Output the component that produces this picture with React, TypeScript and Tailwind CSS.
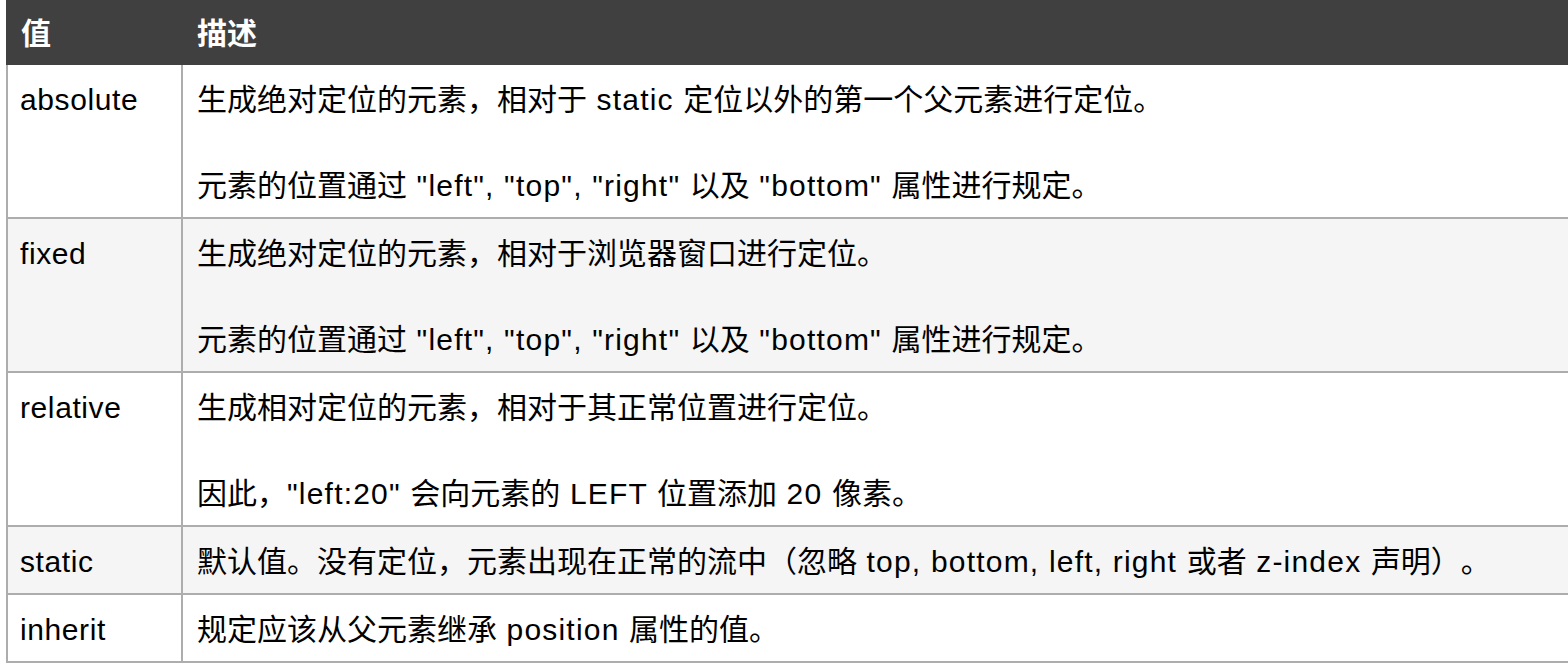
const rows = [
  {
    value: 'absolute',
    lines: ['生成绝对定位的元素，相对于 static 定位以外的第一个父元素进行定位。', '元素的位置通过 "left", "top", "right" 以及 "bottom" 属性进行规定。'],
    alt: false,
  },
  {
    value: 'fixed',
    lines: ['生成绝对定位的元素，相对于浏览器窗口进行定位。', '元素的位置通过 "left", "top", "right" 以及 "bottom" 属性进行规定。'],
    alt: true,
  },
  {
    value: 'relative',
    lines: ['生成相对定位的元素，相对于其正常位置进行定位。', '因此，"left:20" 会向元素的 LEFT 位置添加 20 像素。'],
    alt: false,
  },
  {
    value: 'static',
    lines: ['默认值。没有定位，元素出现在正常的流中（忽略 top, bottom, left, right 或者 z-index 声明）。'],
    alt: true,
  },
  {
    value: 'inherit',
    lines: ['规定应该从父元素继承 position 属性的值。'],
    alt: false,
  },
]

// 西文字符稍微拉开一点，贴近原图的字宽
function Mixed({ text }: { text: string }) {
  const parts = text.split(/([\u0000-\u2000]+)/).filter(Boolean)
  return (
    <>
      {parts.map((p, i) =>
        /^[\u0000-\u2000]+$/.test(p) ? (
          <span key={i} className="tracking-[0.04em]">{p}</span>
        ) : (
          <span key={i}>{p}</span>
        )
      )}
    </>
  )
}

export default function App() {
  return (
    <div className="w-full h-[668px] overflow-hidden bg-white pl-[6px] font-['Liberation_Sans','Noto_Sans_CJK_SC',sans-serif] text-[30px] leading-[36px] text-black [text-spacing-trim:space-all]">
      <div className="w-[1620px]">
        {/* 表头 */}
        <div className="flex h-[65px] items-center bg-[#404040] pt-[3px] font-bold text-white">
          <div className="w-[177px] pl-[15px]">值</div>
          <div className="pl-[14px]">描述</div>
        </div>

        {rows.map((row) => (
          <div
            key={row.value}
            className={`flex border-l-2 border-b-2 border-[#adadad] ${row.alt ? 'bg-[#f5f5f5]' : 'bg-white'}`}
          >
            <div className="w-[175px] shrink-0 border-r-2 border-[#adadad] pt-[17px] pb-[13px] pl-[12px] tracking-[0.02em]">{row.value}</div>
            <div className="flex flex-col gap-[50px] pt-[17px] pb-[13px] pl-[14px]">
              {row.lines.map((line, i) => (
                <p key={i} className="whitespace-nowrap"><Mixed text={line} /></p>
              ))}
            </div>
          </div>
        ))}
      </div>
    </div>
  )
}
